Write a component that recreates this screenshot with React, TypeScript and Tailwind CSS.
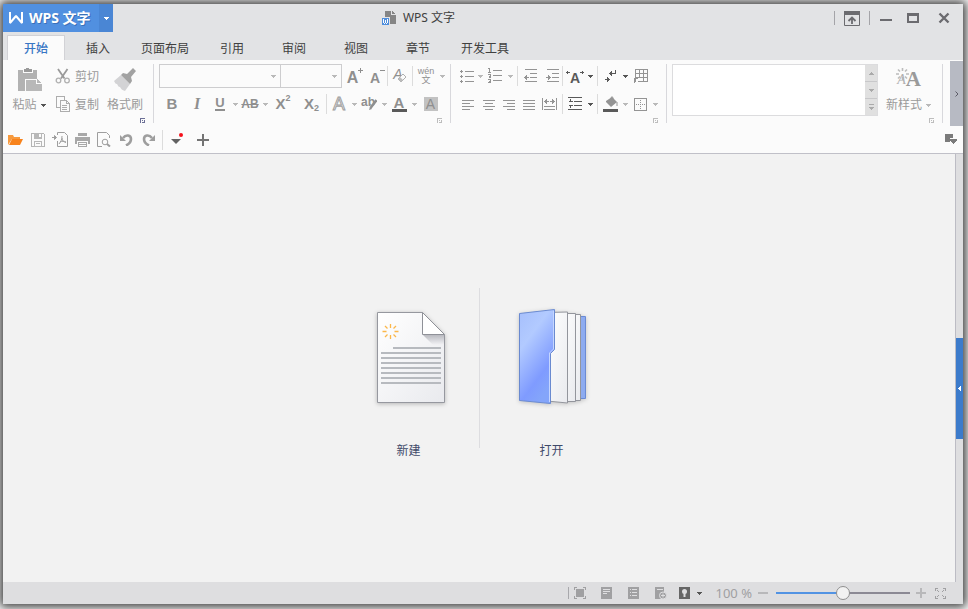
import React, { useState } from "react";

type Kids = { children?: React.ReactNode };

/* ---------- shared pieces ---------- */

function Icon({ w = 16, h = 16, smooth, children, className = "" }: Kids & { w?: number; h?: number; smooth?: boolean; className?: string }) {
  return (
    <svg
      width={w}
      height={h}
      viewBox={`0 0 ${w} ${h}`}
      fill="none"
      stroke="currentColor"
      shapeRendering={smooth ? "auto" : "crispEdges"}
      className={`shrink-0 ${className}`}
      aria-hidden="true"
    >
      {children}
    </svg>
  );
}

function Caret({ className = "text-[#b9b9b9]" }: { className?: string }) {
  return (
    <Icon w={5} h={3} className={className}>
      <path d="M0 0h5v1H0zM1 1h3v1H1zM2 2h1v1H2z" fill="currentColor" stroke="none" />
    </Icon>
  );
}

function Tool({ label, w = "w-5", className = "", children }: Kids & { label: string; w?: string; className?: string }) {
  return (
    <button type="button" aria-label={label} title={label} className={`flex h-6 shrink-0 items-center justify-center ${w} ${className}`}>
      {children}
    </button>
  );
}

function Drop({ label, dark, w = "w-2.5" }: { label: string; dark?: boolean; w?: string }) {
  return (
    <Tool label={label} w={w}>
      <Caret className={dark ? "text-[#555555]" : "text-[#b9b9b9]"} />
    </Tool>
  );
}

function Rule({ className = "h-5" }: { className?: string }) {
  return <span className={`w-px shrink-0 bg-[#dcdcdc] ${className}`} />;
}

function Launcher({ label, className = "text-[#bdbdbd]" }: { label: string; className?: string }) {
  return (
    <button type="button" aria-label={label} className={`flex h-[5px] w-[5px] ${className}`}>
      <Icon w={5} h={5}>
        <path d="M0 0h5v1H0zM0 1h1v4H0zM4 2h1v3H4zM2 4h2v1H2zM2 2h1v1H2z" fill="currentColor" stroke="none" />
      </Icon>
    </button>
  );
}

/* ---------- title bar ---------- */

function TitleBar() {
  return (
    <header className="flex h-7 items-stretch">
      <div className="flex w-[110px] shrink-0 text-white">
        <button type="button" className="flex flex-1 items-center bg-[#5190e0] pl-1.5">
          <Icon w={14} h={12} smooth>
            <path d="M1 0v11l6-7 6 7V0" strokeWidth="2" strokeLinejoin="bevel" />
          </Icon>
          <span className="ml-1.5 whitespace-pre text-[14px] font-bold leading-5 [text-shadow:1px_1px_0_#3b71b8]">WPS 文字</span>
        </button>
        <button type="button" aria-label="应用菜单" className="flex w-3.5 items-center justify-center bg-[#4a86d4]">
          <Caret className="text-white" />
        </button>
      </div>
      <h1 className="flex flex-1 items-center justify-center gap-1.5 pr-[110px] text-[12px] leading-5 text-[#404040]">
        <Icon w={15} h={14}>
          <path d="M3 0h6v4h5v9H3z" fill="#858585" stroke="none" />
          <path d="M10 0h1v1h1v1h1v1h-3z" fill="#858585" stroke="none" />
          <path d="M0 7h7v7H0z" fill="#4f8edc" stroke="none" />
          <path d="M7 6v8M0 6.500h8" stroke="#e2e3e5" />
          <path d="M1.500 8v4M5.500 8v4M3.500 9v3M2 12.500h1M4 12.500h1" stroke="#fff" />
        </Icon>
        <span className="whitespace-pre">WPS 文字</span>
      </h1>
      <div className="flex shrink-0 items-center text-[#6b6b6f]">
        <span className="h-3.5 w-px bg-[#a4a4a8]" />
        <button type="button" aria-label="隐藏功能区" className="flex w-[34px] justify-center">
          <Icon w={16} h={15} smooth>
            <path d="M.5.5h15v14H.5z" />
            <path d="M0 0h16v4H0z" fill="currentColor" stroke="none" />
            <path d="M8 6v7M4.500 10 8 6.500l3.500 3.500" strokeWidth="1.800" />
          </Icon>
        </button>
        <span className="h-3.5 w-px bg-[#a4a4a8]" />
        <button type="button" aria-label="最小化" className="flex w-8 justify-center">
          <Icon w={12} h={12}><path d="M0 8h12" strokeWidth="2" /></Icon>
        </button>
        <button type="button" aria-label="最大化" className="flex w-[22px] justify-center">
          <Icon w={12} h={10}><path d="M1 0v10M11 0v10M0 9h12" strokeWidth="2" /><path d="M0 1.500h12" strokeWidth="3" /></Icon>
        </button>
        <button type="button" aria-label="关闭" className="flex w-[39px] justify-center">
          <Icon w={12} h={12} smooth><path d="m1.500 1.500 9 9M10.500 1.500l-9 9" strokeWidth="2.400" /></Icon>
        </button>
      </div>
    </header>
  );
}

const tabs = ["开始", "插入", "页面布局", "引用", "审阅", "视图", "章节", "开发工具"];

function Tabs() {
  const [active, setActive] = useState("开始");
  return (
    <nav className="flex items-end pl-0.5 pt-[3px]" role="tablist">
      {tabs.map((t) => (
        <button
          key={t}
          type="button"
          role="tab"
          aria-selected={t === active}
          onClick={() => setActive(t)}
          className={
            t === active
              ? "mx-0.5 h-[25px] min-w-[58px] border border-b-0 border-[#d2d2d6] bg-[#fbfbfb] px-2.5 pt-px text-[12px] font-medium text-[#3876c4]"
              : "h-[25px] min-w-[62px] px-3 pt-0.5 text-[12px] text-[#404040]"
          }
        >
          {t}
        </button>
      ))}
    </nav>
  );
}

/* ---------- ribbon ---------- */

function ClipboardGroup() {
  return (
    <section aria-label="剪贴板" className="relative flex w-[151px] shrink-0 border-r border-[#d8d8dc] text-[12px] leading-4 text-[#9a9a9a]">
      <button type="button" className="flex w-[52px] flex-col items-center justify-between pb-2.5 pt-1">
        <Icon w={25} h={24}>
          <path d="M1 2h5v3h10V2h4v9H8v12H1z" fill="#b2b2b2" stroke="none" />
          <path d="M7 1h2V0h3v1h3v3H7z" fill="#9a9a9a" stroke="none" />
          <path d="M9 12h10v4h6v7H9z" fill="#b8b8b8" stroke="none" />
          <path d="m20 11 5 4h-5z" fill="#b8b8b8" stroke="none" />
        </Icon>
        <span className="flex items-center gap-1 whitespace-nowrap">粘贴<Caret className="text-[#555555]" /></span>
      </button>
      <div className="flex w-[47px] flex-col gap-1">
        <button type="button" className="flex h-6 items-center gap-1 whitespace-nowrap">
          <Icon w={16} h={16} smooth>
            <path d="M3 1l6.500 9.500M12.500 1 6 10.500" strokeWidth="1.800" />
            <circle cx="3.500" cy="12.500" r="2.300" strokeWidth="1.300" stroke="#b0b0b0" />
            <circle cx="12" cy="12.500" r="2.300" strokeWidth="1.300" stroke="#b0b0b0" />
          </Icon>
          <span className="pt-0.5">剪切</span>
        </button>
        <button type="button" className="flex h-6 items-center gap-1 whitespace-nowrap">
          <Icon w={16} h={16}>
            <path d="M4.500 11.500h-3V.500h8v3" stroke="#adadad" />
            <path d="M5.500 4.500h6l3 3v8h-9z" fill="#fbfbfb" stroke="#adadad" />
            <path d="M11.500 4.500v3h3M7 9.500h5M7 11.500h5M7 13.500h5" stroke="#adadad" />
          </Icon>
          <span className="pt-0.5">复制</span>
        </button>
      </div>
      <button type="button" className="flex w-[46px] flex-col items-center justify-between whitespace-nowrap pb-2.5 pt-1">
        <Icon w={24} h={24} smooth>
          <path d="m1 13 7-6 9 9-5 7C9 22 8 21 7 19c-2 0-2-2-3-3-2 0-2-2-3-3Z" fill="#d3d3d5" stroke="none" />
          <path d="m8 7 2-2 4 1 6-6 3 3-5 6 1 4-2 3z" fill="#a2a2a2" stroke="none" />
        </Icon>
        格式刷
      </button>
      <span className="absolute bottom-0 right-2 flex"><Launcher label="剪贴板选项" className="text-[#6b6f96]" /></span>
    </section>
  );
}

function Combo({ label, className }: { label: string; className: string }) {
  return (
    <div className={`relative h-6 border-y border-r border-[#cdcdcf] bg-[#fbfbfb] ${className}`}>
      <select aria-label={label} className="h-full w-full appearance-none bg-transparent px-1 text-[12px]" defaultValue="">
        <option value="" />
      </select>
      <span className="pointer-events-none absolute inset-y-0 right-1 flex items-center"><Caret /></span>
    </div>
  );
}

function FontGroup() {
  return (
    <section aria-label="字体" className="relative flex w-[297px] shrink-0 flex-col gap-1 border-r border-[#d8d8dc] pl-[5px] text-[#8f8f8f]">
      <div className="flex items-center">
        <Combo label="字体" className="w-[122px] border-l" />
        <Combo label="字号" className="w-[61px]" />
        <Tool label="增大字号" w="w-[26px]" className="font-['Liberation_Sans',sans-serif] text-[16px] font-bold leading-5">
          <span className="pt-1">A</span><Icon w={5} h={5} className="-mt-3"><path d="M0 2.500h5M2.500 0v5" /></Icon>
        </Tool>
        <Tool label="减小字号" w="w-[19px]" className="font-['Liberation_Sans',sans-serif] text-[14px] font-bold leading-5">
          <span className="pt-1">A</span><Icon w={5} h={5} className="-mt-3"><path d="M0 2.500h5" /></Icon>
        </Tool>
        <Rule />
        <Tool label="清除格式" w="w-6">
          <span className="pb-1 font-['Liberation_Sans',sans-serif] text-[14px] italic leading-4 text-[#8f8f8f]">A</span>
          <Icon w={10} h={16} smooth className="-ml-1.5">
            <path d="m1 11 5-5 3 3-5 5z" fill="#fbfbfb" stroke="#b0b0b0" strokeLinejoin="round" />
            <path d="m1 11 2-2 3 3-2 2z" fill="#bcbcbc" stroke="none" />
          </Icon>
        </Tool>
        <Rule />
        <Tool label="拼音指南" w="w-[26px]" className="flex-col font-['Liberation_Sans','Noto_Sans_CJK_SC',sans-serif] text-[9px]">
          <span className="leading-[8px]">wén</span>
          <span className="leading-[10px]">文</span>
        </Tool>
        <Drop label="拼音选项" w="w-1.5" />
      </div>
      <div className="flex items-center font-['Liberation_Serif',serif] text-[16px] font-bold leading-5">
        <Tool label="加粗" w="w-[26px]"><span className="font-['Liberation_Sans',sans-serif] text-[15px]">B</span></Tool>
        <Tool label="倾斜" w="w-6" className="italic">I</Tool>
        <Tool label="下划线" w="w-[22px]">
          <span className="border-b-2 border-current font-['Liberation_Sans',sans-serif] text-[13px] leading-3">U</span>
        </Tool>
        <Drop label="下划线类型" w="w-2" />
        <Tool label="删除线" w="w-[22px]" className="font-['Liberation_Sans',sans-serif] text-[12px]"><span className="line-through">AB</span></Tool>
        <Drop label="删除线选项" w="w-2" />
        <Tool label="上标" w="w-7" className="font-['Liberation_Sans',sans-serif] text-[15px]">
          X<span className="-mt-3 text-[9px]">2</span>
        </Tool>
        <Tool label="下标" w="w-[29px]" className="font-['Liberation_Sans',sans-serif] text-[15px]">
          X<span className="mt-2 text-[9px]">2</span>
        </Tool>
        <Rule />
        <Tool label="文字效果" w="w-6">
          <span className="font-['Liberation_Sans',sans-serif] text-[18px] font-normal text-[#fbfbfb] [-webkit-text-stroke:1px_#a0a0a0]">A</span>
        </Tool>
        <Drop label="更多文字效果" w="w-1.5" />
        <Tool label="突出显示" w="w-6" className="font-['Liberation_Sans',sans-serif] text-[12px]">
          <span className="pb-1">ab</span>
          <Icon w={8} h={14} smooth className="-ml-1.5"><path d="m1.500 11 6-8" strokeWidth="2.500" /><path d="m0 13 1-3 2 2z" fill="currentColor" stroke="none" /></Icon>
        </Tool>
        <Drop label="突出显示颜色" w="w-1.5" />
        <Tool label="字体颜色" w="w-6">
          <span className="w-[15px] border-b-[3px] border-[#5a5a5a] font-['Liberation_Sans',sans-serif] text-[15px] leading-[13px]">A</span>
        </Tool>
        <Drop label="选择字体颜色" w="w-1.5" />
        <Tool label="字符底纹" w="w-[27px]">
          <span className="w-3.5 bg-[#c2c2c2] font-['Liberation_Sans',sans-serif] text-[14px] font-normal leading-[14px]">A</span>
        </Tool>
      </div>
      <span className="absolute bottom-0 right-2 flex"><Launcher label="字体选项" /></span>
    </section>
  );
}

function Lines({ d }: { d: string }) {
  return <Icon w={12} h={12}><path d={d} /></Icon>;
}

function ParagraphGroup() {
  return (
    <section aria-label="段落" className="relative flex w-[216px] shrink-0 flex-col gap-1 border-r border-[#d8d8dc] pl-[5px] text-[#949494]">
      <div className="flex items-center">
        <Tool label="项目符号" w="w-[21px]">
          <Icon w={14} h={13}>
            <path d="M5 1.500h9M5 6.500h9M5 11.500h9" />
            <path d="M0 1.500h3M1.500 0v3M0 6.500h3M1.500 5v3M0 11.500h3M1.500 10v3" />
          </Icon>
        </Tool>
        <Drop label="项目符号库" w="w-1.5" />
        <Tool label="编号" w="w-6">
          <Icon w={14} h={16}>
            <path d="M5 2.500h9M5 7.500h9M5 12.500h9" />
            <path d="M1.500 0v4M0 .500h1M0 4.500h3M0 6.500h2.500v1.500H1v1.500h2M0 11.500h2.500v3H0M1 13.500h1.500" />
          </Icon>
        </Tool>
        <Drop label="编号库" w="w-1.5" />
        <span className="w-1" />
        <Rule />
        <Tool label="减少缩进量" w="w-6">
          <Icon w={13} h={14}>
            <path d="M1 .500h12M6 4.500h7M6 8.500h7M1 12.500h12M0 8.500h5M2.500 6v5M1.500 7v3" />
          </Icon>
        </Tool>
        <Tool label="增加缩进量" w="w-5">
          <Icon w={13} h={14}>
            <path d="M1 .500h12M6 4.500h7M6 8.500h7M1 12.500h12M0 8.500h5M2.500 6v5M3.500 7v3" />
          </Icon>
        </Tool>
        <Rule />
        <Tool label="中文版式" w="w-6" className="text-[#595959]">
          <span className="flex items-end font-['Liberation_Sans',sans-serif] text-[14px] font-bold leading-4">
            <Icon w={4} h={17}><path d="M0 3.500h4M1.500 2v3" /></Icon>
            <span className="pt-1">A</span>
            <Icon w={4} h={17}><path d="M0 3.500h4M2.500 2v3" /></Icon>
          </span>
        </Tool>
        <Drop label="更多中文版式" dark w="w-1.5" />
        <span className="w-1" />
        <Rule />
        <Tool label="显示编辑标记" w="w-6" className="text-[#595959]">
          <Icon w={11} h={13}>
            <path d="M10.500 0v4M4 3.500h7M5.500 2v3M6.500 1v5M0 9.500h5M3.500 8v3M2.500 7v5" />
          </Icon>
        </Tool>
        <Drop label="编辑标记选项" dark w="w-1.5" />
        <Tool label="制表位" w="w-[26px]">
          <Icon w={14} h={14}>
            <path d="M1.500 13V.500h12v12H4M5.500 0v9M9.500 0v13M1 4.500h13M1 8.500h13M.500 14V9M0 9.500h4" />
          </Icon>
        </Tool>
      </div>
      <div className="flex items-center">
        <Tool label="左对齐" w="w-6"><Lines d="M0 2.500h12M0 5.500h8M0 8.500h12M0 11.500h8" /></Tool>
        <Tool label="居中" w="w-[18px]"><Lines d="M0 2.500h12M2 5.500h8M0 8.500h12M2 11.500h8" /></Tool>
        <Tool label="右对齐" w="w-[22px]"><Lines d="M0 2.500h12M4 5.500h8M0 8.500h12M4 11.500h8" /></Tool>
        <Tool label="两端对齐" w="w-[18px]"><Lines d="M0 2.500h12M0 5.500h12M0 8.500h12M0 11.500h12" /></Tool>
        <Tool label="分散对齐" w="w-[22px]">
          <Icon w={15} h={12}>
            <path d="M.500 0v12M14.500 0v12M2 8.500h11M2 11.500h11M2 3.500h5M8 3.500h5M4.500 1v5M3.500 2v3M10.500 1v5M11.500 2v3" />
          </Icon>
        </Tool>
        <span className="w-0.5" />
        <Rule />
        <Tool label="行距" w="w-6" className="text-[#595959]">
          <Icon w={14} h={14}>
            <path d="M0 .500h14M6 4.500h8M6 8.500h8M0 12.500h14M2.500 2v3M1 4.500h4M2.500 8v3M1 8.500h4" />
          </Icon>
        </Tool>
        <Drop label="行距选项" dark w="w-1.5" />
        <span className="w-1" />
        <Rule />
        <Tool label="底纹颜色" w="w-6">
          <Icon w={15} h={16} smooth>
            <path d="m3 5 6-4 5 5-6 5-5-5z" fill="currentColor" stroke="none" />
            <path d="M8 5V1.500Q9 0 10 1.500V3M14 6v4" />
            <path d="M0 13h15v3H0z" fill="#5a5a5a" stroke="none" />
          </Icon>
        </Tool>
        <Drop label="选择底纹颜色" w="w-1.5" />
        <Tool label="边框" w="w-6">
          <Icon w={13} h={13}>
            <path d="M.500.500h12v12H.500z" />
            <path d="M2 6.500h10M6.500 2v10" strokeDasharray="1 1" />
          </Icon>
        </Tool>
        <Drop label="边框选项" w="w-1.5" />
      </div>
      <span className="absolute bottom-0 right-2 flex"><Launcher label="段落选项" /></span>
    </section>
  );
}

function StyleGroup() {
  return (
    <section aria-label="样式" className="relative flex min-w-[160px] flex-1 items-start border-r border-[#d8d8dc] pl-[5px] pr-[3px]">
      <div className="flex h-[52px] flex-1 border border-[#dcdcde] bg-white">
        <div className="flex-1" />
        <div className="flex w-3 flex-col divide-y divide-[#c8c8ca] bg-[#e0e0e0] text-[#aaaaaa]">
          <button type="button" aria-label="上一行样式" className="flex flex-1 items-center justify-center">
            <Icon w={5} h={3}><path d="M2 0h1v1H2zM1 1h3v1H1zM0 2h5v1H0z" fill="currentColor" stroke="none" /></Icon>
          </button>
          <button type="button" aria-label="下一行样式" className="flex flex-1 items-center justify-center"><Caret className="text-[#aaaaaa]" /></button>
          <button type="button" aria-label="更多样式" className="flex flex-1 items-center justify-center">
            <Icon w={5} h={6}><path d="M0 0h5v1H0zM0 3h5v1H0zM1 4h3v1H1zM2 5h1v1H2z" fill="currentColor" stroke="none" /></Icon>
          </button>
        </div>
      </div>
      <button type="button" className="flex h-[59px] w-[61px] flex-col items-center justify-between pb-2.5 pt-1 text-[12px] leading-4 text-[#9a9a9a]">
        <span className="flex items-end font-['Liberation_Serif',serif] leading-[22px]">
          <Icon w={13} h={12} smooth className="-mr-3 self-start">
            <path d="M6.500 0v3M6.500 9v3M0 6h3M10 6h3M2 1.500l2 2M11 1.500l-2 2M2 10.500l2-2M11 10.500l-2-2" stroke="#bcbcbc" strokeWidth="1.600" />
          </Icon>
          <span className="text-[14px] italic leading-5 text-[#b0b0b0]">A</span>
          <span className="text-[21px] font-bold">A</span>
        </span>
        <span className="flex items-center gap-1 whitespace-nowrap">新样式<Caret /></span>
      </button>
      <span className="absolute bottom-0 right-2 flex"><Launcher label="样式选项" /></span>
    </section>
  );
}

function Ribbon() {
  return (
    <div className="flex bg-[#fbfbfb]">
      <div className="flex min-w-0 flex-1 pb-[3px] pt-1">
        <ClipboardGroup />
        <FontGroup />
        <ParagraphGroup />
        <StyleGroup />
      </div>
      <button type="button" aria-label="展开更多" className="ml-[7px] mt-px flex w-[13px] items-center justify-center bg-[#b7bac3] text-[#5c5c66]">
        <Icon w={4} h={6} smooth><path d="m.500.500 2.500 2.500-2.500 2.500" /></Icon>
      </button>
    </div>
  );
}

/* ---------- quick access bar ---------- */

function QuickAccess() {
  return (
    <div className="flex h-7 items-center border-b border-[#c0c0c8] bg-[#fbfbfb] pl-px text-[#9e9e9e]">
      <Tool label="打开" w="w-[23px]">
        <Icon w={15} h={12} smooth>
          <path d="M0 11V1h5l1 2h6v2H4z" fill="#f79a3e" stroke="none" />
          <path d="M4 5h11l-3 6H1z" fill="#f8831c" stroke="none" />
        </Icon>
      </Tool>
      <Tool label="保存" w="w-[22px]">
        <Icon w={14} h={14}>
          <path d="M.500.500h12l1 1v12H.500z" stroke="#b4b4b4" />
          <path d="M3 0h8v6H3zM3 8h8v6H3z" fill="#b8b8b8" stroke="none" />
          <path d="M8 1h2v3H8zM4 9h6v4H4z" fill="#fbfbfb" stroke="none" />
          <path d="M5 10.500h4" stroke="#b8b8b8" />
        </Icon>
      </Tool>
      <Tool label="输出为PDF" w="w-[22px]">
        <Icon w={16} h={15} smooth>
          <path d="M5.500 3V.500h7l3 3v11h-10V9" />
          <path d="M0 5.500h4M2.500 3.500v4l2-2z" fill="currentColor" />
          <path d="M10 4c0 4-1 5-3 8M10 6c0 3 2 4 4 4.500M8 10c2-1 4-1 6 0" />
        </Icon>
      </Tool>
      <Tool label="打印" w="w-[22px]">
        <Icon w={15} h={14}>
          <path d="M3 0h9v3H3zM0 4h15v7h-2V8H2v3H0zM3 9h9v5H3z" fill="#a8a8a8" stroke="none" />
          <path d="M4 10.500h7M4 12.500h7" stroke="#fbfbfb" />
        </Icon>
      </Tool>
      <Tool label="打印预览" w="w-[22px]">
        <Icon w={14} h={15} smooth>
          <path d="M5 14.500H.500V.500h9l3 3V6" />
          <circle cx="8" cy="10" r="2.800" />
          <path d="m10 12 3 2.500" strokeWidth="2" />
        </Icon>
      </Tool>
      <Tool label="撤销" w="w-[22px]">
        <Icon w={13} h={13} smooth>
          <path d="M0 2v6h6z" fill="currentColor" stroke="none" />
          <path d="M3 5c3-4 8-3 8 1 0 3-2 5-5 6.500" strokeWidth="2.600" />
        </Icon>
      </Tool>
      <Tool label="恢复" w="w-[22px]">
        <Icon w={13} h={13} smooth>
          <path d="M13 2v6H7z" fill="currentColor" stroke="none" />
          <path d="M10 5C7 1 2 2 2 6c0 3 2 5 5 6.500" strokeWidth="2.600" />
        </Icon>
      </Tool>
      <span className="w-[3px]" />
      <Rule />
      <Tool label="自定义快速访问工具栏" w="w-[27px]">
        <Icon w={14} h={14} smooth>
          <path d="M1 6h10l-5 5z" fill="#626262" stroke="none" />
          <circle cx="11" cy="2" r="2" fill="#f5101a" stroke="none" />
        </Icon>
      </Tool>
      <Tool label="新建标签" w="w-[26px]">
        <Icon w={12} h={12}><path d="M0 6h12M6 0v12" stroke="#747474" strokeWidth="2" /></Icon>
      </Tool>
      <span className="flex-1" />
      <Tool label="窗口列表" w="w-6">
        <Icon w={12} h={11}>
          <path d="M0 0h8v4H5v4H0z" fill="#7b7b7b" stroke="none" />
          <path d="M5 5h7v2h-1v1h-1v1H9v1H8V9H7V8H6V7H5z" fill="#7b7b7b" stroke="none" />
        </Icon>
      </Tool>
    </div>
  );
}

/* ---------- start page ---------- */

function NewDocArt() {
  return (
    <svg width="76" height="100" viewBox="-4 0 76 100" aria-hidden="true" className="drop-shadow-[0_1px_2px_rgba(0,0,0,0.25)]">
      <defs>
        <linearGradient id="page" x1="0" y1="0" x2="1" y2="1">
          <stop offset="0" stopColor="#ffffff" />
          <stop offset="1" stopColor="#e9eaee" />
        </linearGradient>
        <linearGradient id="fold" x1="0" y1="0" x2="0" y2="1">
          <stop offset="0" stopColor="#b9bac0" />
          <stop offset="1" stopColor="#f3f3f6" />
        </linearGradient>
      </defs>
      <path d="M2.500 4.500h45l22 22v68h-67z" fill="url(#page)" stroke="#96989f" />
      <path d="M48 27h21v10H58z" fill="url(#fold)" />
      <path d="M47.500 4.500v22h22z" fill="#fff" stroke="#8f9198" />
      <g stroke="#b7babf" strokeWidth="2">
        <path d="M18 40h48M6 45h60M6 50h60M6 55h60M6 60h60M6 65h60M6 70h60M6 75h60" />
      </g>
      <g stroke="#fbb74a" strokeWidth="1.300">
        <path d="M15.500 16v4M15.500 27v4M7.500 23.500h4M19.500 23.500h4M10 18l2.500 2.500M21 18l-2.500 2.500M10 29l2.500-2.500M21 29l-2.500-2.500" />
      </g>
    </svg>
  );
}

function OpenArt() {
  return (
    <svg width="72" height="100" viewBox="-1 0 72 100" aria-hidden="true" className="drop-shadow-[0_1px_2px_rgba(0,0,0,0.2)]">
      <defs>
        <linearGradient id="cover" x1="0" y1="0" x2="0.500" y2="1">
          <stop offset="0" stopColor="#a6bffc" />
          <stop offset="0.350" stopColor="#b2caff" />
          <stop offset="0.800" stopColor="#7f9bff" />
          <stop offset="1" stopColor="#84a5fa" />
        </linearGradient>
        <linearGradient id="sheet" x1="0" y1="0" x2="1" y2="1">
          <stop offset="0" stopColor="#ffffff" />
          <stop offset="1" stopColor="#e9eaee" />
        </linearGradient>
      </defs>
      <path d="M62.500 8.500h6v82h-6z" fill="#8dabf0" stroke="#6a8ad4" />
      <path d="M50 6.500h13.500v86H50z" fill="url(#sheet)" stroke="#93959c" />
      <path d="M44 5.500h14.500v88H44z" fill="url(#sheet)" stroke="#93959c" />
      <path d="m30 4.500 20.500-.500v91L30 93z" fill="url(#sheet)" stroke="#93959c" />
      <path d="m2.500 5.500 35-4v40l-4 4v50l-31-3z" fill="url(#cover)" stroke="#6a8ad0" />
      <path d="M36.500 3v38l-4 4v49" fill="none" stroke="#c5d6ff" />
    </svg>
  );
}

function StartPage() {
  const item = "-mb-4 flex w-[142px] flex-col items-center justify-between pb-[3px] pl-0.5 pt-5 text-[12px] leading-5 text-[#3f4a6a]";
  return (
    <main className="flex flex-1 bg-[#dedee0]">
      <div className="flex min-w-0 flex-1 items-center justify-center border-r border-[#bcbcc4] bg-[#f2f2f2]">
        <div className="flex h-40 items-stretch">
          <button type="button" className={item}>
            <NewDocArt />
            新建
          </button>
          <span className="w-px bg-[#dddde0]" />
          <button type="button" className={item}>
            <OpenArt />
            打开
          </button>
        </div>
      </div>
      <aside className="flex w-[7px] items-center pt-10">
        <button type="button" aria-label="展开任务窗格" className="flex h-[101px] w-full items-center justify-center bg-[#3c7bcb] text-white">
          <Icon w={3} h={5}><path d="M0 2h1v1H0zM1 1h1v3H1zM2 0h1v5H2z" fill="currentColor" stroke="none" /></Icon>
        </button>
      </aside>
    </main>
  );
}

/* ---------- status bar ---------- */

function StatusBar() {
  const [zoom, setZoom] = useState(50);
  return (
    <footer className="flex h-[22px] items-center justify-end bg-[#dedee0] pr-3 text-[#a0a0a2]">
      <span className="h-3 w-px bg-[#a8a8ac]" />
      <Tool label="适合页面" w="w-[23px]">
        <Icon w={12} h={12}>
          <path d="M2 2h8v8H2z" fill="currentColor" stroke="none" />
          <path d="M.500 3V.500H3M9 .500h2.500V3M11.500 9v2.500H9M3 11.500H.500V9" />
        </Icon>
      </Tool>
      <Tool label="页面视图" w="w-[30px]">
        <Icon w={11} h={12}>
          <path d="M0 0h11v12H0z" fill="currentColor" stroke="none" />
          <path d="M2 2.500h7M2 4.500h7M2 6.500h4" stroke="#dedee0" />
        </Icon>
      </Tool>
      <Tool label="大纲视图" w="w-6">
        <Icon w={11} h={12}>
          <path d="M0 0h11v12H0z" fill="currentColor" stroke="none" />
          <path d="M2 2.500h1M4 2.500h5M2 5.500h1M4 5.500h5M2 8.500h1M4 8.500h5" stroke="#dedee0" />
        </Icon>
      </Tool>
      <Tool label="网页视图" w="w-[30px]">
        <Icon w={12} h={12} smooth>
          <path d="M0 0h9v12H0z" fill="currentColor" stroke="none" />
          <path d="M2 2.500h6" stroke="#dedee0" />
          <circle cx="8" cy="8.500" r="3.500" fill="#a0a0a2" stroke="#dedee0" />
          <path d="M6 8.500h4M8 6.500v4" stroke="#dedee0" />
        </Icon>
      </Tool>
      <Tool label="护眼模式" w="w-[18px]">
        <Icon w={11} h={12} smooth>
          <path d="M0 0h11v12H0z" fill="#666666" stroke="none" />
          <circle cx="5.500" cy="4.500" r="2.500" fill="#dedee0" stroke="none" />
          <path d="M4.500 6h2v4h-2z" fill="#dedee0" stroke="none" />
        </Icon>
      </Tool>
      <Drop label="模式选项" dark w="w-3" />
      <output className="ml-2.5 whitespace-pre text-[13px] leading-5">{zoom * 2} %</output>
      <Tool label="缩小" w="w-[22px]">
        <Icon w={10} h={10}><path d="M0 5h10" strokeWidth="2" stroke="#b8b8ba" /></Icon>
      </Tool>
      <input
        type="range"
        aria-label="显示比例"
        min={0}
        max={100}
        value={zoom}
        onChange={(e) => setZoom(Number(e.target.value))}
        className="mx-0.5 h-3.5 w-[134px] appearance-none bg-[linear-gradient(to_right,#5293e3_50%,#8b8994_50%)] bg-[length:100%_2px] bg-center bg-no-repeat [&::-webkit-slider-thumb]:size-3.5 [&::-webkit-slider-thumb]:appearance-none [&::-webkit-slider-thumb]:rounded-full [&::-webkit-slider-thumb]:border [&::-webkit-slider-thumb]:border-[#8f8f8f] [&::-webkit-slider-thumb]:bg-[#f2f2f2]"
      />
      <Tool label="放大" w="w-[18px]">
        <Icon w={10} h={10}><path d="M0 5h10M5 0v10" strokeWidth="2" stroke="#b8b8ba" /></Icon>
      </Tool>
      <Tool label="全屏显示" w="w-[21px]">
        <Icon w={11} h={11}>
          <path d="M.500 3V.500H3M8 .500h2.500V3M10.500 8v2.500H8M3 10.500H.500V8" />
          <path d="M2 2h1v1H2zM3 3h1v1H3zM8 2h1v1H8zM7 3h1v1H7zM2 8h1v1H2zM3 7h1v1H3zM8 8h1v1H8zM7 7h1v1H7z" fill="currentColor" stroke="none" />
        </Icon>
      </Tool>
    </footer>
  );
}

export default function App() {
  return (
    <div className="flex min-h-screen overflow-hidden bg-white pb-[5px] pl-[3px] pr-[5px] pt-1 font-['Noto_Sans','Noto_Sans_CJK_SC',sans-serif]">
      <div className="flex min-w-0 flex-1 flex-col bg-[#e2e3e5] shadow-[0_0_10px_3px_rgba(0,0,0,0.8)]">
        <TitleBar />
        <Tabs />
        <Ribbon />
        <QuickAccess />
        <StartPage />
        <StatusBar />
      </div>
    </div>
  );
}
